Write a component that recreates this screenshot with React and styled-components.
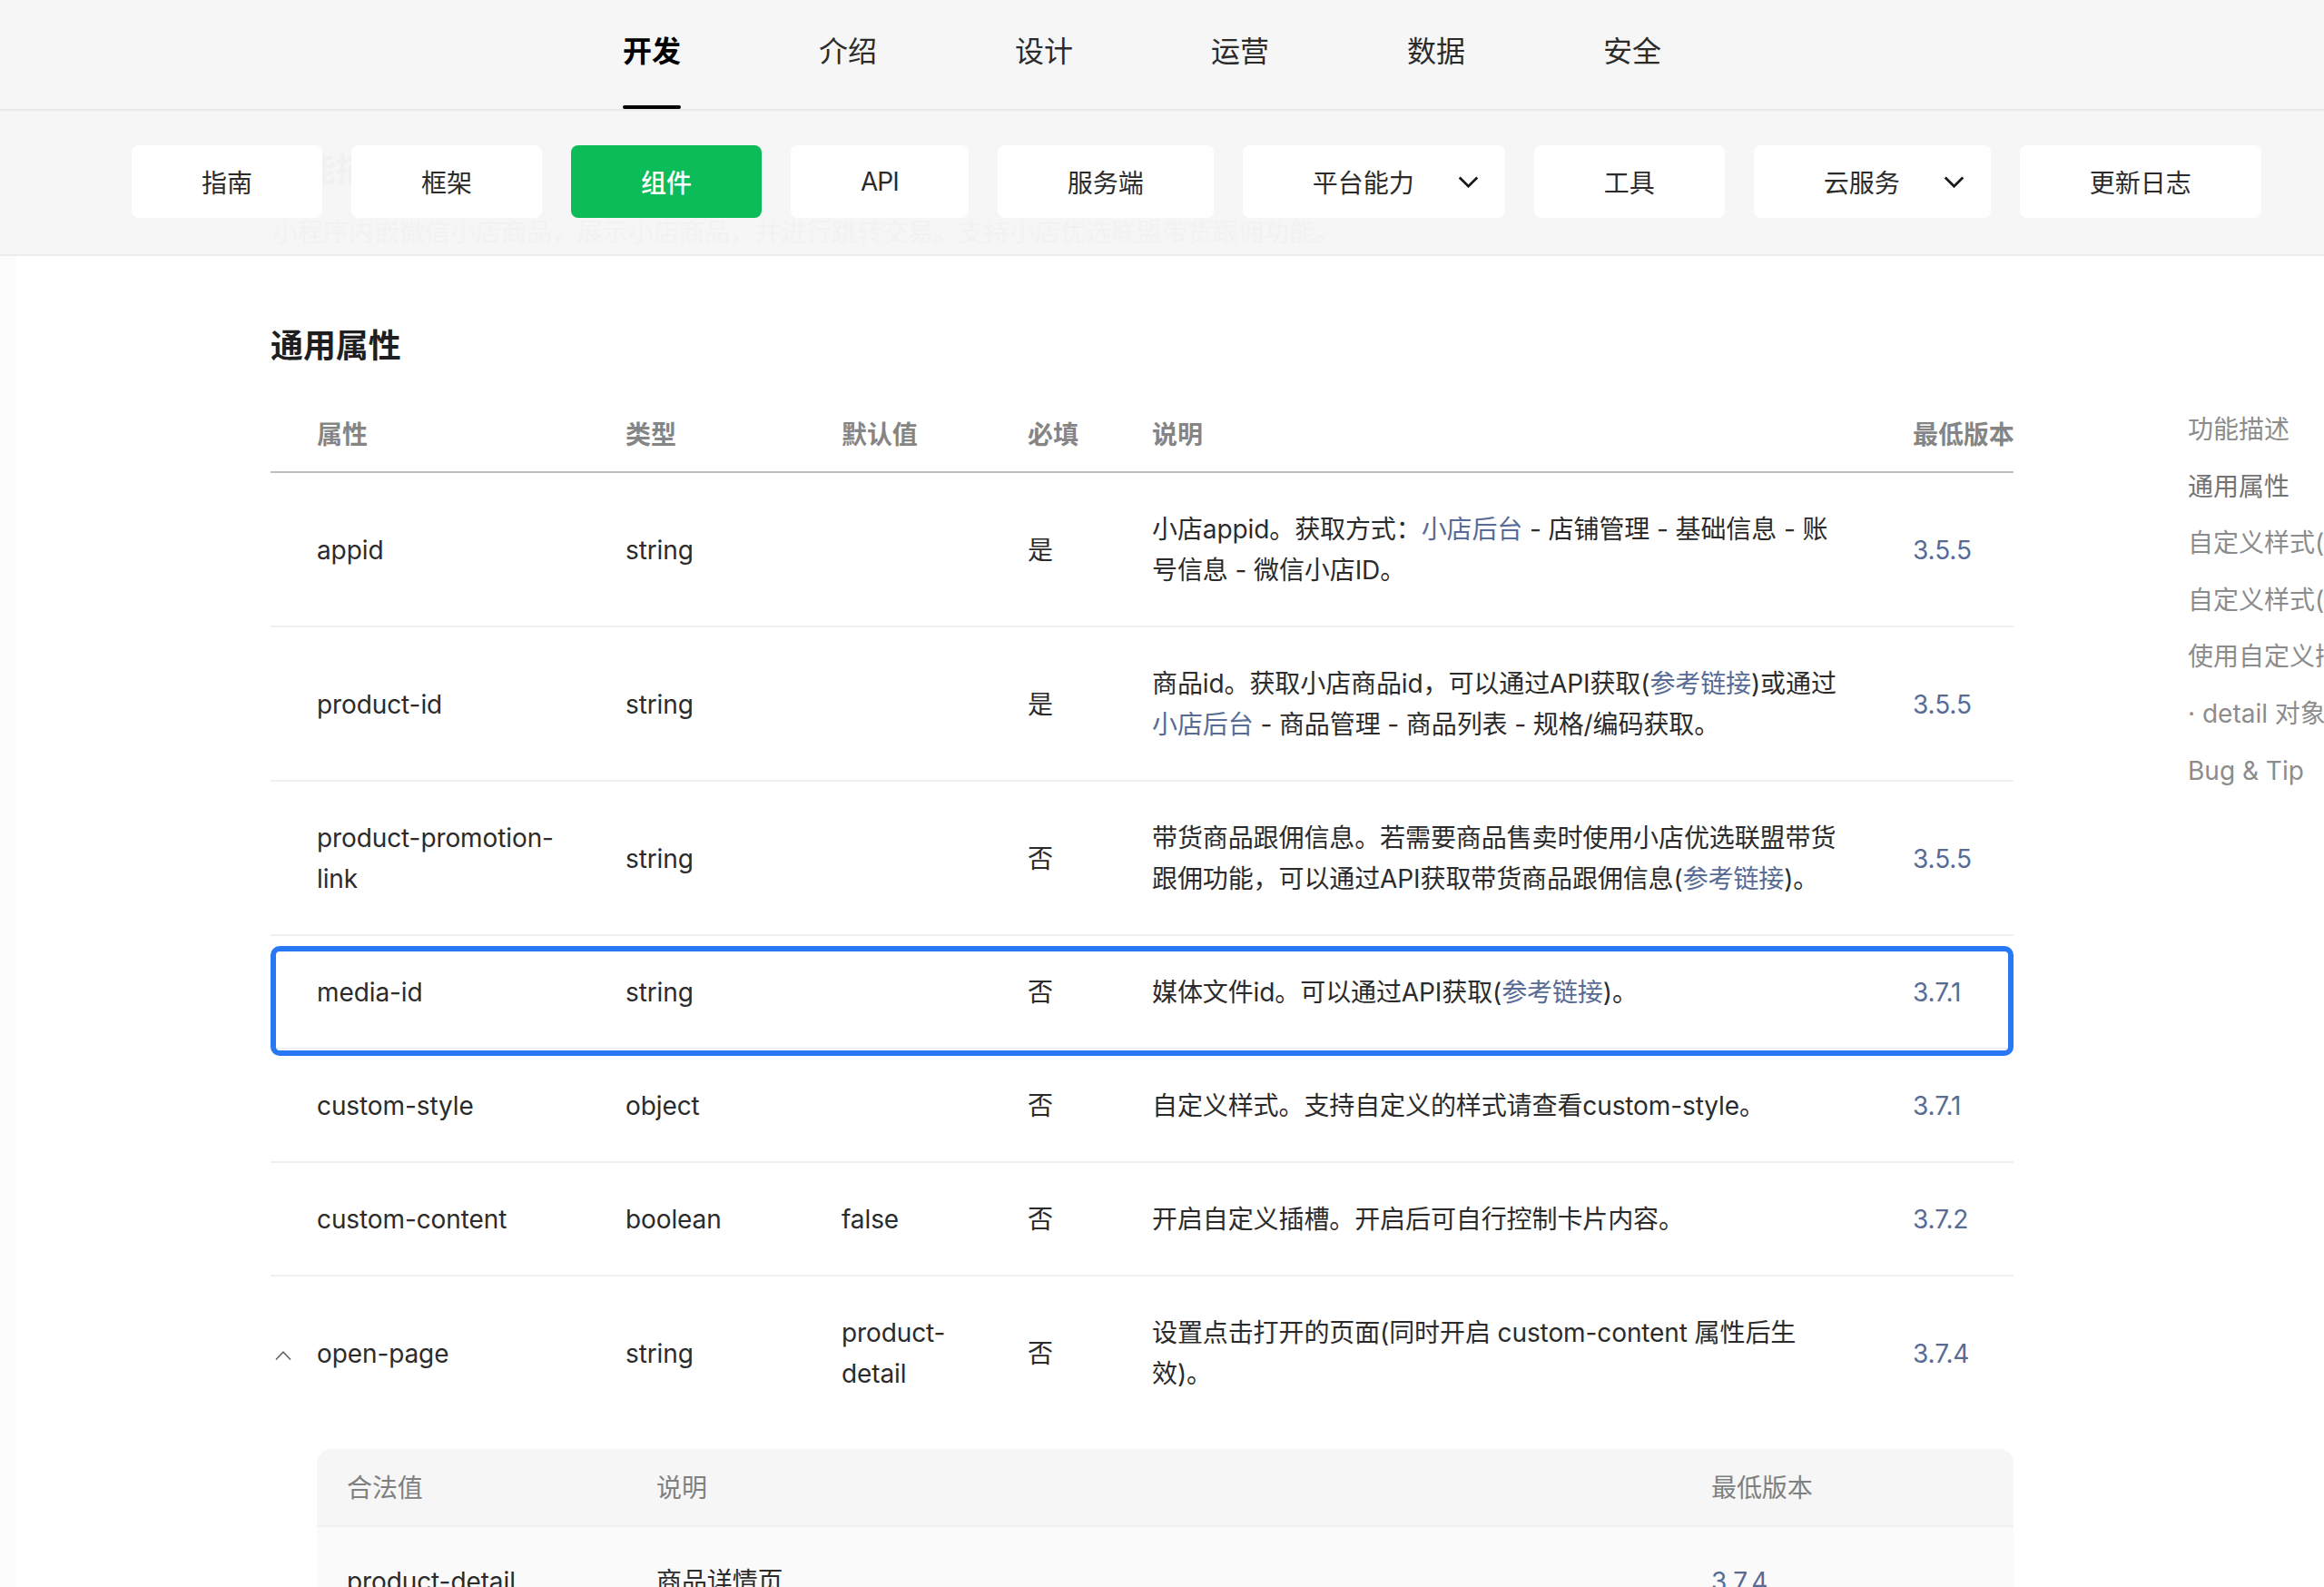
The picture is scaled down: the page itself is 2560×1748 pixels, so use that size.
import React from 'react';
import styled, { createGlobalStyle } from 'styled-components';

const navItems = ['开发', '介绍', '设计', '运营', '数据', '安全'];

const subNavItems = [
  { label: '指南' },
  { label: '框架' },
  { label: '组件', active: true },
  { label: 'API', tight: true },
  { label: '服务端' },
  { label: '平台能力', menu: true },
  { label: '工具' },
  { label: '云服务', menu: true },
  { label: '更新日志' },
];

const tocItems = [
  '功能描述',
  '通用属性',
  '自定义样式(custom-style)',
  '自定义样式(custom-content)',
  '使用自定义插槽',
  '· detail 对象',
  'Bug & Tip',
];

function Chevron() {
  return (
    <ChevronIcon viewBox="0 0 24 14" fill="none" stroke="#1a1a1a" strokeWidth="3">
      <path d="M1.5 1.5 L12 12 L22.5 1.5" />
    </ChevronIcon>
  );
}

function App() {
  return (
    <Page>
      <GlobalStyle />
      <Header>
        <GhostTitle>功能描述</GhostTitle>
        <GhostText>小程序内嵌微信小店商品，展示小店商品，并进行跳转交易。支持小店优选联盟带货跟佣功能。</GhostText>
        <TopNav>
          {navItems.map((item, i) => (
            <TopNavItem key={item} $active={i === 0}>{item}</TopNavItem>
          ))}
        </TopNav>
        <SubNav>
          {subNavItems.map(({ label, active, menu, tight }) => (
            <SubNavButton key={label} $active={active} $menu={menu} $tight={tight}>
              {label}
              {menu && <Chevron />}
            </SubNavButton>
          ))}
        </SubNav>
      </Header>
      <Main>
        <SideEdge />
        <Content>
          <Heading>通用属性</Heading>
          <HeadRow>
            <span>属性</span>
            <span>类型</span>
            <span>默认值</span>
            <span>必填</span>
            <span>说明</span>
            <span>最低版本</span>
          </HeadRow>
          <Row>
            <span>appid</span>
            <span>string</span>
            <span />
            <span>是</span>
            <span>
              小店appid。获取方式：<Link>小店后台</Link> - 店铺管理 - 基础信息 - 账<br />
              号信息 - 微信小店ID。
            </span>
            <Link>3.5.5</Link>
          </Row>
          <Row>
            <span>product-id</span>
            <span>string</span>
            <span />
            <span>是</span>
            <span>
              商品id。获取小店商品id，可以通过API获取(<Link>参考链接</Link>)或通过<br />
              <Link>小店后台</Link> - 商品管理 - 商品列表 - 规格/编码获取。
            </span>
            <Link>3.5.5</Link>
          </Row>
          <Row>
            <span>product-promotion-<br />link</span>
            <span>string</span>
            <span />
            <span>否</span>
            <span>
              带货商品跟佣信息。若需要商品售卖时使用小店优选联盟带货<br />
              跟佣功能，可以通过API获取带货商品跟佣信息(<Link>参考链接</Link>)。
            </span>
            <Link>3.5.5</Link>
          </Row>
          <Row>
            <Highlight />
            <span>media-id</span>
            <span>string</span>
            <span />
            <span>否</span>
            <span>媒体文件id。可以通过API获取(<Link>参考链接</Link>)。</span>
            <Link>3.7.1</Link>
          </Row>
          <Row>
            <span>custom-style</span>
            <span>object</span>
            <span />
            <span>否</span>
            <span>自定义样式。支持自定义的样式请查看custom-style。</span>
            <Link>3.7.1</Link>
          </Row>
          <Row>
            <span>custom-content</span>
            <span>boolean</span>
            <span>false</span>
            <span>否</span>
            <span>开启自定义插槽。开启后可自行控制卡片内容。</span>
            <Link>3.7.2</Link>
          </Row>
          <Row $plain>
            <Toggle viewBox="0 0 18 10" fill="none" stroke="#666" strokeWidth="1.6">
              <path d="M1 9.5 L9 1.2 L17 9.5" />
            </Toggle>
            <span>open-page</span>
            <span>string</span>
            <span>product-<br />detail</span>
            <span>否</span>
            <span>
              设置点击打开的页面(同时开启 custom-content 属性后生<br />
              效)。
            </span>
            <Link>3.7.4</Link>
          </Row>
          <SubTable>
            <SubHead>
              <span>合法值</span>
              <span>说明</span>
              <span>最低版本</span>
            </SubHead>
            <SubRow>
              <span>product-detail</span>
              <span>商品详情页</span>
              <Link>3.7.4</Link>
            </SubRow>
          </SubTable>
        </Content>
        <Toc>
          {tocItems.map((item, i) => (
            <TocItem key={item} $active={i === 1}>{item}</TocItem>
          ))}
        </Toc>
      </Main>
    </Page>
  );
}

export default App;

const GlobalStyle = createGlobalStyle`
  html,
  body {
    margin: 0;
    padding: 0;
    background: #fff;
  }

  body {
    font-family: Inter, "Noto Sans CJK SC", sans-serif;
    font-size: 28px;
    color: #2b2b2b;
  }
`;

const Page = styled.div`
  width: 2560px;
  height: 1748px;
  overflow: hidden;
`;

const Header = styled.header`
  position: relative;
  height: 282px;
  background: #f6f6f6;
  border-bottom: 2px solid #ededed;
  box-sizing: border-box;
`;

const GhostTitle = styled.div`
  position: absolute;
  left: 298px;
  top: 162px;
  font-size: 36px;
  font-weight: 600;
  line-height: 50px;
  color: #f1f1f1;
`;

const GhostText = styled.div`
  position: absolute;
  left: 300px;
  top: 234px;
  line-height: 45px;
  color: #f2f2f2;
`;

const TopNav = styled.nav`
  position: relative;
  display: flex;
  gap: 152px;
  height: 122px;
  box-sizing: border-box;
  padding-left: 686px;
  border-bottom: 2px solid #e9e9e9;
`;

const TopNavItem = styled.a`
  position: relative;
  font-size: 32px;
  line-height: 114px;
  font-weight: ${(p) => (p.$active ? 600 : 400)};
  color: ${(p) => (p.$active ? '#000' : '#2b2b2b')};

  &::after {
    content: '';
    display: ${(p) => (p.$active ? 'block' : 'none')};
    position: absolute;
    left: 0;
    right: 0;
    bottom: 0;
    height: 4px;
    border-radius: 2px;
    background: #000;
  }
`;

const SubNav = styled.div`
  position: relative;
  display: flex;
  gap: 32px;
  padding: 38px 0 0 145px;
`;

const SubNavButton = styled.a`
  display: flex;
  align-items: center;
  gap: 48px;
  height: 80px;
  padding: 0 ${(p) => (p.$menu ? '29px' : '77px')} 0 77px;
  border-radius: 8px;
  background: ${(p) => (p.$active ? '#0cbc58' : '#fff')};
  color: ${(p) => (p.$active ? '#fff' : '#2b2b2b')};
  font-weight: ${(p) => (p.$active ? 500 : 400)};
  letter-spacing: ${(p) => (p.$tight ? '-1px' : '0')};
`;

const ChevronIcon = styled.svg`
  width: 23px;
  height: 13px;
`;

const Main = styled.main`
  display: flex;
`;

const SideEdge = styled.div`
  width: 18px;
  height: 1466px;
  background: #fcfcfc;
  flex-shrink: 0;
`;

const Content = styled.section`
  width: 1920px;
  margin-left: 280px;
  flex-shrink: 0;
  letter-spacing: -0.1px;
`;

const Heading = styled.h2`
  margin: 74px 0 32px;
  font-size: 36px;
  line-height: 50px;
  font-weight: 600;
  color: #1f1f1f;
`;

const columns = '340px 238px 205px 137px 838px 111px';

const HeadRow = styled.div`
  display: grid;
  grid-template-columns: ${columns};
  align-items: center;
  height: 83px;
  padding: 0 0 3px 51px;
  box-sizing: border-box;
  border-bottom: 2px solid #bdbdbd;
  font-weight: 600;
  color: #858585;
  white-space: nowrap;
`;

const Row = styled.div`
  position: relative;
  display: grid;
  grid-template-columns: ${columns};
  align-items: center;
  padding: 40px 0 38px 51px;
  line-height: 45px;
  border-bottom: ${(p) => (p.$plain ? '0' : '2px solid #f0f0f0')};
`;

const Link = styled.span`
  color: #576b95;
`;

const Highlight = styled.div`
  position: absolute;
  left: 0;
  right: 0;
  top: 11px;
  bottom: -9px;
  border: 6px solid #2878f5;
  border-radius: 10px;
`;

const Toggle = styled.svg`
  position: absolute;
  left: 5px;
  top: 82px;
  width: 18px;
  height: 10px;
`;

const SubTable = styled.div`
  margin: 22px 0 0 51px;
  border-radius: 16px 16px 0 0;
  background: #fafafa;
  overflow: hidden;
`;

const subColumns = '341px 1162px 1fr';

const SubHead = styled.div`
  display: grid;
  grid-template-columns: ${subColumns};
  align-items: center;
  height: 86px;
  padding: 0 0 2px 33px;
  box-sizing: border-box;
  background: #f6f6f6;
  border-bottom: 2px solid #f1f1f1;
  color: #808080;
`;

const SubRow = styled.div`
  display: grid;
  grid-template-columns: ${subColumns};
  align-items: center;
  padding: 38px 0 40px 33px;
  line-height: 45px;
`;

const Toc = styled.aside`
  flex: 1;
  min-width: 0;
  margin-left: 192px;
  padding-top: 160px;
  display: flex;
  flex-direction: column;
  overflow: hidden;
  white-space: nowrap;
`;

const TocItem = styled.a`
  line-height: 62.6px;
  color: ${(p) => (p.$active ? '#737373' : '#8c8c8c')};
`;
